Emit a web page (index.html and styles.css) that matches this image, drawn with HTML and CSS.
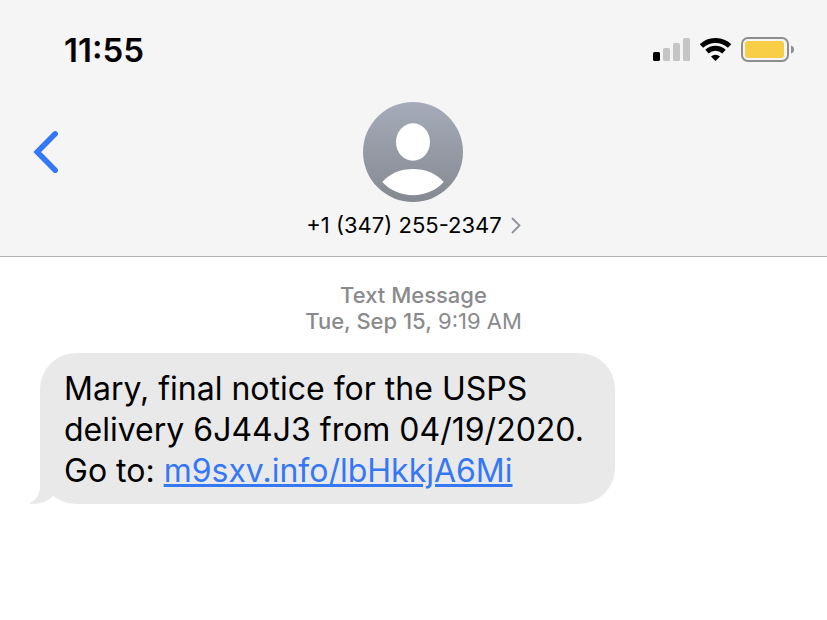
FILE: index.html
```html
<!DOCTYPE html>
<html lang="en">
<head>
  <meta charset="UTF-8" />
  <meta name="viewport" content="width=device-width, initial-scale=1.0" />
  <title>Messages</title>
  <link rel="stylesheet" href="styles.css">
</head>
<body>
  <header>
    <div class="status-bar">
      <time class="clock">11:55</time>
      <div class="status-icons">
        <svg width="38" height="24" viewBox="0 0 38 24" aria-hidden="true">
          <rect x="0" y="14" width="7" height="9" rx="1.5" fill="#000"/>
          <rect x="10" y="10" width="7" height="13" rx="1.5" fill="#c5c5c5"/>
          <rect x="20" y="5" width="7" height="18" rx="1.5" fill="#c5c5c5"/>
          <rect x="30" y="0" width="7" height="23" rx="1.5" fill="#c5c5c5"/>
        </svg>
        <svg width="32" height="24" viewBox="0 0 32 24" aria-hidden="true">
          <g fill="none" stroke="#000" stroke-width="5">
            <path d="M1.4 8A20.8 20.8 0 0 1 29.6 8"/>
            <path d="M7 13.6A12.4 12.4 0 0 1 24 13.6"/>
          </g>
          <path d="M15.5 23L11 18.6A6.6 6.6 0 0 1 20 18.6Z"/>
        </svg>
        <svg width="54" height="26" viewBox="0 0 54 26" aria-hidden="true">
          <rect x="1" y="1" width="46" height="23" rx="6" fill="none" stroke="#8e8e90" stroke-width="2"/>
          <rect x="4" y="4" width="39" height="17" rx="3" fill="#f8ce46"/>
          <path d="M50 8.5Q53 9.5 53 12.5T50 16.5Z" fill="#8e8e90"/>
        </svg>
      </div>
    </div>

    <nav class="chat-nav">
      <button class="back" aria-label="Back">
        <svg width="26" height="44" viewBox="0 0 26 44" aria-hidden="true">
          <path d="M23.2 3.8L5.2 22L23.2 40.2" fill="none" stroke="#3478f6" stroke-width="5.5" stroke-linecap="round" stroke-linejoin="miter"/>
        </svg>
      </button>
      <button class="contact">
        <svg width="100" height="100" viewBox="0 0 100 100" aria-hidden="true">
          <defs>
            <linearGradient id="avatar" x1="0" y1="0" x2="0" y2="1">
              <stop offset="0" stop-color="#a5abb9"/>
              <stop offset="1" stop-color="#858991"/>
            </linearGradient>
          </defs>
          <circle cx="50" cy="50" r="50" fill="url(#avatar)"/>
          <ellipse cx="50" cy="40" rx="17" ry="18.8" fill="#fff"/>
          <path d="M19.3 80C33 62.5 67 62.5 80.7 80C65 97.5 35 97.5 19.3 80Z" fill="#fff"/>
        </svg>
        <span class="number">
          +1 (347) 255-2347
          <svg width="10" height="18" viewBox="0 0 10 18" aria-hidden="true">
            <path d="M1 2L8.5 9.5L1 17" fill="none" stroke="#8e929b" stroke-width="1.8"/>
          </svg>
        </span>
      </button>
    </nav>
  </header>

  <main class="messages">
    <p class="timestamp"><b>Text Message</b><br><b>Tue, Sep 15,</b> 9:19 AM</p>

    <div class="bubble">
      <p>Mary, final notice for the USPS delivery 6J44J3 from 04/19/2020. Go to: <a href="#">m9sxv.info/lbHkkjA6Mi</a></p>
      <svg class="tail" width="34" height="40" viewBox="0 0 34 40" aria-hidden="true">
        <path d="M11 0V21C11 31 7 36 0 39.5C10 41 18 38 24 32L34 20V0Z" fill="#e9e9e9"/>
      </svg>
    </div>
  </main>
</body>
</html>
```

FILE: styles.css
```css
* {
  box-sizing: border-box;
}

body {
  margin: 0;
  font-family: Inter, "Liberation Sans", sans-serif;
  background: white;
  color: black;
}

header {
  background-color: #f5f5f5;
  border-bottom: 1px solid #b2b2b4;
  padding-bottom: 16px;
}

.status-bar {
  display: flex;
  justify-content: space-between;
  align-items: center;
  padding: 30px 32px 32px 64px;
}

.clock {
  font-size: 33px;
  font-weight: 600;
  line-height: 40px;
}

.status-icons {
  display: flex;
  align-items: center;
  gap: 9px;
}

.chat-nav {
  display: grid;
  grid-template-columns: 1fr auto 1fr;
  align-items: start;
}

button {
  border: none;
  background: none;
  padding: 0;
  font: inherit;
  color: inherit;
  cursor: pointer;
}

.back {
  justify-self: start;
  padding: 28px 32px;
}

.back svg {
  display: block;
}

.contact {
  display: flex;
  flex-direction: column;
  align-items: center;
  gap: 8px;
}

.number {
  display: flex;
  align-items: center;
  gap: 9px;
  font-size: 22px;
  line-height: 30px;
}

.messages {
  padding: 25px 40px;
}

.timestamp {
  margin: 0 0 19px;
  text-align: center;
  font-size: 22px;
  line-height: 26px;
  color: #8a8a8d;
}

.timestamp b {
  font-weight: 500;
}

.bubble {
  position: relative;
  width: fit-content;
  max-width: 575px;
  padding: 15px 24px 13px;
  border-radius: 36px;
  background-color: #e9e9e9;
  font-size: 32px;
  line-height: 41px;
}

.bubble p {
  margin: 0;
}

.bubble a {
  color: #3478f6;
}

.tail {
  position: absolute;
  left: -11px;
  bottom: 0;
}
```
